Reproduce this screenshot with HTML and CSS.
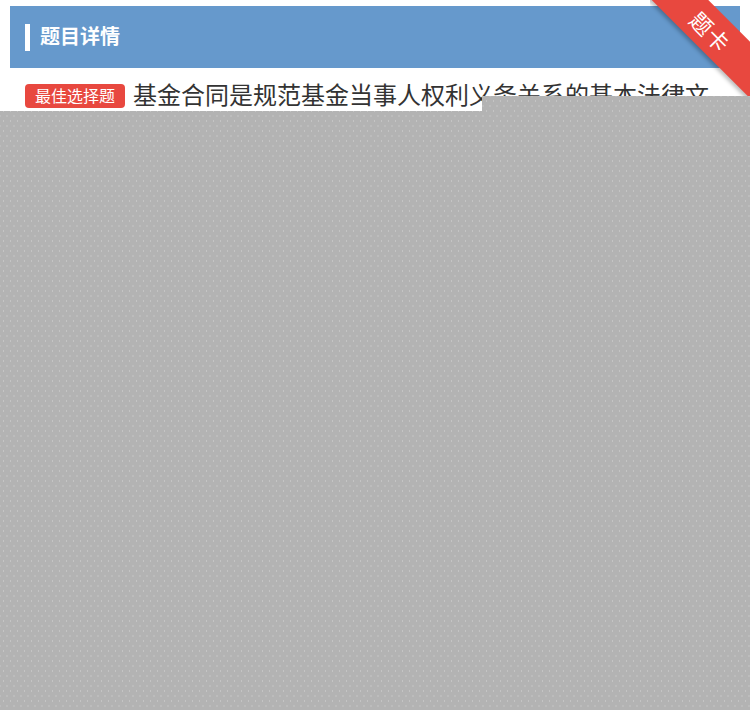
FILE: index.html
```html
<!DOCTYPE html>
<html lang="zh">
<head>
<meta charset="utf-8">
<title>题目详情</title>
<link rel="stylesheet" href="styles.css">
</head>
<body>
<div class="page">
  <div class="header">
    <span class="header-bar"></span>
    <span class="header-title">题目详情</span>
  </div>
  <div class="question">
    <span class="tag">最佳选择题</span><span class="q-text">基金合同是规范基金当事人权利义务关系的基本法律文件，其内容应当符合相关法律法规的规定。</span>
  </div>
  <div class="ribbon">
    <div class="ribbon-band">题卡</div>
  </div>
  <div class="overlay"></div>
</div>
</body>
</html>
```
FILE: styles.css
```css
html, body {
  margin: 0;
  padding: 0;
  background: #ffffff;
}
body {
  font-family: "Noto Sans CJK SC", "Noto Sans", "Liberation Sans", sans-serif;
  width: 750px;
  height: 710px;
  overflow: hidden;
}
.page {
  position: relative;
  width: 750px;
  height: 710px;
  padding-top: 6px;
  box-sizing: border-box;
}
.header {
  margin: 0 10px;
  height: 62px;
  background: #6699cc;
  display: flex;
  align-items: center;
  padding-left: 15px;
  box-sizing: border-box;
}
.header-bar {
  width: 5px;
  height: 27px;
  background: #ffffff;
  margin-right: 10px;
}
.header-title {
  color: #ffffff;
  font-size: 20px;
  font-weight: bold;
  line-height: 1;
  margin-top: -2px;
}
.question {
  margin-top: 8px;
  padding: 0 25px;
  line-height: 36px;
  font-size: 24px;
  color: #333333;
}
.tag {
  display: inline-block;
  vertical-align: top;
  margin-top: 8px;
  height: 24px;
  line-height: 23px;
  padding: 0 10px;
  background: #e8483f;
  color: #ffffff;
  font-size: 16px;
  border-radius: 4px;
  margin-right: 8px;
}
.ribbon {
  position: absolute;
  top: 0;
  right: 0;
  width: 100px;
  height: 96px;
  overflow: hidden;
}
.ribbon-band {
  position: absolute;
  left: -39px;
  top: 11px;
  width: 200px;
  height: 40px;
  line-height: 40px;
  background: #e8483f;
  color: #ffffff;
  text-align: center;
  font-size: 22px;
  font-weight: normal;
  letter-spacing: 1px;
  transform: rotate(45deg);
  box-shadow: 0 3px 4px rgba(0, 0, 0, 0.25);
  border-radius: 6px;
}
.overlay {
  position: absolute;
  left: 0;
  right: 0;
  top: 96px;
  bottom: 0;
  background-color: #b3b3b3;
  background-image:
    radial-gradient(circle, #c4c4c4 0.7px, transparent 1.1px),
    radial-gradient(circle, #c4c4c4 0.7px, transparent 1.1px);
  background-size: 7px 10px, 7px 10px;
  background-position: 0 0, 3.5px 5px;
  clip-path: polygon(0 15px, 482px 15px, 482px 0, 100% 0, 100% 100%, 0 100%);
}
```
